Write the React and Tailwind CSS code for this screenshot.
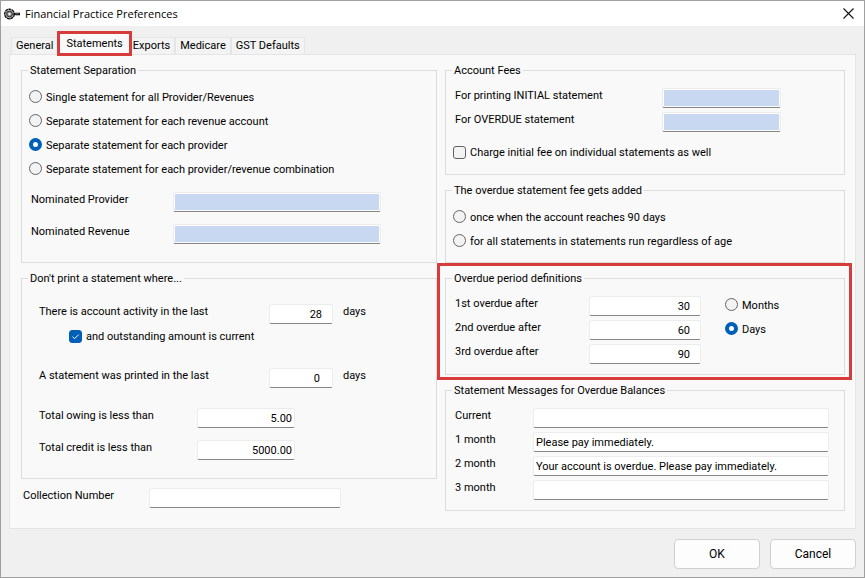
import { useState } from 'react';

const TABS = ['General', 'Statements', 'Exports', 'Medicare', 'GST Defaults'];

const SEPARATION_OPTIONS = [
  'Single statement for all Provider/Revenues',
  'Separate statement for each revenue account',
  'Separate statement for each provider',
  'Separate statement for each provider/revenue combination'
];

const OVERDUE_FEE_OPTIONS = [
  'once when the account reaches 90 days',
  'for all statements in statements run regardless of age'
];

const OVERDUE_PERIODS = [
  { id: 'overdue-1', label: '1st overdue after', value: '30' },
  { id: 'overdue-2', label: '2nd overdue after', value: '60' },
  { id: 'overdue-3', label: '3rd overdue after', value: '90' }
];

const MESSAGES = [
  { id: 'msg-current', label: 'Current', value: '' },
  { id: 'msg-1', label: '1 month', value: 'Please pay immediately.' },
  { id: 'msg-2', label: '2 month', value: 'Your account is overdue. Please pay immediately.' },
  { id: 'msg-3', label: '3 month', value: '' }
];

function Group({ title, children }) {
  return (
    <fieldset className="min-w-0 px-1.5 border border-[#dcdcdc]">
      <legend className="h-4 px-0.5 leading-[18px]">{title}</legend>
      {children}
    </fieldset>
  );
}

function Field({ id, label, value = '', labelClass, inputClass, suffix }) {
  return (
    <div className="flex items-start">
      <label htmlFor={id} className={`shrink-0 leading-4 ${labelClass}`}>{label}</label>
      <input
        id={id}
        type="text"
        defaultValue={value}
        className={`h-5 min-w-0 border border-[#ececec] border-b-[#868686] rounded-xs outline-none ${inputClass}`}
      />
      {suffix ? <span className="ml-2.5 leading-4">{suffix}</span> : null}
    </div>
  );
}

function Radio({ name, label, checked, onChange }) {
  return (
    <label className="flex items-center h-[23px] mb-px gap-1">
      <input
        type="radio"
        name={name}
        checked={checked}
        onChange={onChange}
        className="appearance-none size-[13px] shrink-0 rounded-full border border-[#626262] bg-[#f3f3f3] checked:border-4 checked:border-[#005fb8] checked:bg-white"
      />
      <span className="pt-0.5 leading-4">{label}</span>
    </label>
  );
}

function Checkbox({ label, defaultChecked = false }) {
  return (
    <label className="flex items-center h-6 gap-1">
      <span className="grid size-[13px] shrink-0">
        <input
          type="checkbox"
          defaultChecked={defaultChecked}
          className="col-start-1 row-start-1 appearance-none peer size-[13px] rounded-[3px] border border-[#626262] bg-[#f3f3f3] checked:border-[#005fb8] checked:bg-[#005fb8]"
        />
        <svg viewBox="0 0 13 13" className="invisible col-start-1 row-start-1 pointer-events-none peer-checked:visible size-[13px]" fill="none" stroke="#fff">
          <path d="M3.5 6.7 5.6 8.7 9.7 4.6" />
        </svg>
      </span>
      <span className="pt-0.5 leading-4">{label}</span>
    </label>
  );
}

function AppIcon() {
  return (
    <svg viewBox="0 0 16 12" className="w-4 h-3" fill="none">
      <circle cx="5.5" cy="6" r="4.8" fill="#c4c4c4" stroke="#111" strokeWidth="1.4" strokeDasharray="3 .5" />
      <circle cx="5.5" cy="6" r="2.9" fill="#8a8a8a" stroke="#222" strokeWidth=".9" />
      <circle cx="5.5" cy="6" r="1.2" fill="#fff" />
      <path d="M9.5 6H12" stroke="#111" strokeWidth="1.6" />
      <path d="M11.5 6H16" stroke="#111" strokeWidth="2.6" />
      <path d="M12 5.8h3" stroke="#aaa" strokeWidth=".6" />
    </svg>
  );
}

export default function App() {
  const [activeTab, setActiveTab] = useState('Statements');
  const [separation, setSeparation] = useState(2);
  const [feeRule, setFeeRule] = useState(null);
  const [periodUnit, setPeriodUnit] = useState('Days');

  return (
    <div className="flex flex-col min-h-screen border border-[#a0a0a0] bg-[#f0f0f0] font-['Roboto',sans-serif] text-[11px] text-black">
      <header className="flex items-center justify-between h-[25px] pl-[3px] pr-2.5 bg-white">
        <div className="flex items-center gap-[5px]">
          <AppIcon />
          <h1 className="font-['Open_Sans',sans-serif] leading-4">Financial Practice Preferences</h1>
        </div>
        <button type="button" aria-label="Close">
          <svg viewBox="0 0 11 11" className="size-[11px]" fill="none" stroke="#111" strokeWidth="1.1">
            <path d="M.5.5l10 10M10.5.5l-10 10" />
          </svg>
        </button>
      </header>

      <div className="flex items-end h-7 px-2.5" role="tablist">
        {TABS.map((tab) => (
          <button
            key={tab}
            type="button"
            role="tab"
            aria-selected={tab === activeTab}
            onClick={() => setActiveTab(tab)}
            className={
              tab === activeTab
                ? 'relative -ml-px -mr-1 -mb-0.5 h-[25px] px-1.5 pt-0.5 border-3 border-[#d83b3b] bg-[#f9f9f9]'
                : 'h-[17px] px-1 border border-b-0 border-[#e5e5e5] bg-[#f3f3f3]'
            }
          >
            {tab}
          </button>
        ))}
      </div>

      <main className="grid grid-cols-[26fr_25fr] gap-2 mx-2 pl-[11px] pr-2.5 pt-[7px] pb-[17px] border border-[#e5e5e5] bg-[#f9f9f9]">
        <div className="flex flex-col gap-[7px]">
          <Group title="Statement Separation">
            <div className="px-px pt-[7px] pb-1.5">
              {SEPARATION_OPTIONS.map((option, i) => (
                <Radio key={option} name="separation" label={option} checked={separation === i} onChange={() => setSeparation(i)} />
              ))}
              <div className="flex flex-col gap-3 px-0.5 pt-[11px] pb-3">
                <Field id="nominated-provider" label="Nominated Provider" labelClass="w-[142px]" inputClass="w-[208px] bg-[#c7d8f0] shadow-[inset_0_0_0_1px_#fff]" />
                <Field id="nominated-revenue" label="Nominated Revenue" labelClass="w-[142px]" inputClass="w-[208px] bg-[#c7d8f0] shadow-[inset_0_0_0_1px_#fff]" />
              </div>
            </div>
          </Group>

          <Group title="Don't print a statement where...">
            <div className="pl-[11px] pt-[18px] pb-[18px]">
              <Field id="activity-days" label="There is account activity in the last" value="28" labelClass="w-[230px]" inputClass="w-16 pr-2.5 bg-white text-right" suffix="days" />
              <div className="pl-[30px]">
                <Checkbox label="and outstanding amount is current" defaultChecked />
              </div>
              <div className="pt-5">
                <Field id="printed-days" label="A statement was printed in the last" value="0" labelClass="w-[230px]" inputClass="w-16 pr-3 bg-white text-right" suffix="days" />
              </div>
              <div className="flex flex-col gap-3 pt-5">
                <Field id="total-owing" label="Total owing is less than" value="5.00" labelClass="w-[158px]" inputClass="w-[98px] pr-0.5 bg-white text-right" />
                <Field id="total-credit" label="Total credit is less than" value="5000.00" labelClass="w-[158px]" inputClass="w-[98px] pr-0.5 bg-white text-right" />
              </div>
            </div>
          </Group>

          <div className="pl-0.5 pt-0.5">
            <Field id="collection-number" label="Collection Number" labelClass="w-[126px]" inputClass="w-48 bg-white" />
          </div>
        </div>

        <div className="flex flex-col gap-[7px]">
          <Group title="Account Fees">
            <div className="px-px pt-2.5 pb-2.5">
              <div className="flex flex-col gap-1 px-0.5 pb-2">
                <Field id="fee-initial" label="For printing INITIAL statement" labelClass="w-[207px]" inputClass="w-[119px] bg-[#c7d8f0] shadow-[inset_0_0_0_1px_#fff]" />
                <Field id="fee-overdue" label="For OVERDUE statement" labelClass="w-[207px]" inputClass="w-[119px] bg-[#c7d8f0] shadow-[inset_0_0_0_1px_#fff]" />
              </div>
              <Checkbox label="Charge initial fee on individual statements as well" />
            </div>
          </Group>

          <Group title="The overdue statement fee gets added">
            <div className="px-px pt-[7px] pb-[9px]">
              {OVERDUE_FEE_OPTIONS.map((option, i) => (
                <Radio key={option} name="fee-rule" label={option} checked={feeRule === i} onChange={() => setFeeRule(i)} />
              ))}
            </div>
          </Group>

          <div className="relative">
            <Group title="Overdue period definitions">
              <div className="flex gap-6 pl-[3px]">
                <div className="flex flex-col gap-1 pt-2.5 pb-2.5">
                  {OVERDUE_PERIODS.map((period) => (
                    <Field key={period.id} {...period} labelClass="w-[134px]" inputClass="w-28 pr-2.5 bg-white text-right" />
                  ))}
                </div>
                <div className="pt-[7px]">
                  {['Months', 'Days'].map((unit) => (
                    <Radio key={unit} name="period-unit" label={unit} checked={periodUnit === unit} onChange={() => setPeriodUnit(unit)} />
                  ))}
                </div>
              </div>
            </Group>
            <div className="absolute -left-2 -right-[7px] -top-[7px] -bottom-[5px] border-3 border-[#d83b3b] pointer-events-none" />
          </div>

          <Group title="Statement Messages for Overdue Balances">
            <div className="flex flex-col gap-1 pl-[3px] pr-[9px] pt-2.5 pb-2.5">
              {MESSAGES.map((message) => (
                <Field key={message.id} {...message} labelClass="w-[78px]" inputClass="flex-1 px-0.5 bg-white" />
              ))}
            </div>
          </Group>
        </div>
      </main>

      <footer className="flex justify-end gap-2.5 px-2 pt-2.5 pb-2">
        {['OK', 'Cancel'].map((action) => (
          <button key={action} type="button" className="w-[86px] h-[30px] rounded border border-[#d0d0d0] bg-[#fdfdfd] text-[12px]">
            {action}
          </button>
        ))}
      </footer>
    </div>
  );
}
